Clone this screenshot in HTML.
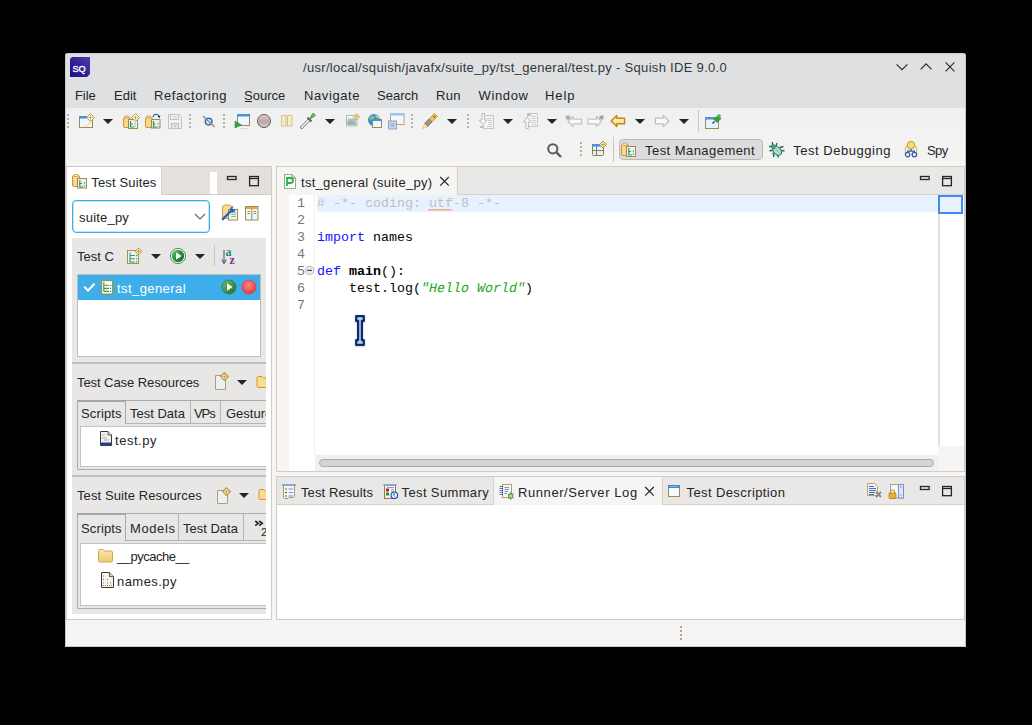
<!DOCTYPE html>
<html><head><meta charset="utf-8">
<style>
html,body{margin:0;padding:0;background:#000;width:1032px;height:725px;overflow:hidden;position:relative}
div,span,svg{position:absolute;box-sizing:border-box}
.t{font-family:"Liberation Sans",sans-serif;font-size:13px;line-height:15px;white-space:pre;color:#232627}
.m{font-family:"Liberation Mono",monospace;font-size:13.33px;line-height:17px;white-space:pre;color:#000}
.dd{width:10px;height:5px}
</style></head><body>
<!-- window -->
<div id="win" style="left:65px;top:53px;width:901px;height:594px;background:#dee0e2;border-radius:3px 3px 0 0"></div>
<!-- toolbar -->
<div style="left:65px;top:108px;width:901px;height:53px;background:linear-gradient(#eff0f1,#f2f2f2 40%,#f3f3f2)"></div>
<!-- main -->
<div style="left:65px;top:161px;width:901px;height:486px;background:#f6f5f4"></div>
<!-- window frame lines -->

<!-- title -->
<div class="t" style="left:303px;top:60px;color:#31363b;letter-spacing:0.31px">/usr/local/squish/javafx/suite_py/tst_general/test.py - Squish IDE 9.0.0</div>

<!-- menu -->
<div class="t" style="left:75px;top:88px;letter-spacing:-0.1px">File</div>
<div class="t" style="left:114px;top:88px">Edit</div>
<div class="t" style="left:154px;top:88px;letter-spacing:0.6px">Refactoring</div>
<div class="t" style="left:244px;top:88px">Source</div>
<div style="left:245px;top:101px;width:7px;height:1px;background:#232627"></div>
<div style="left:189px;top:101px;width:5px;height:1px;background:#232627"></div>
<div class="t" style="left:304px;top:88px;letter-spacing:0.6px">Navigate</div>
<div class="t" style="left:377px;top:88px">Search</div>
<div class="t" style="left:436px;top:88px;letter-spacing:0.34px">Run</div>
<div class="t" style="left:478.5px;top:88px;letter-spacing:0.65px">Window</div>
<div class="t" style="left:545px;top:88px;letter-spacing:0.9px">Help</div>

<!-- toolbar row2 -->
<div style="left:619px;top:139px;width:144px;height:21px;background:#dcdcdc;border:1px solid #b9b9b9;border-radius:4px"></div>
<div class="t" style="left:645px;top:143px;letter-spacing:0.45px">Test Management</div>
<div class="t" style="left:793.3px;top:143px;letter-spacing:0.52px">Test Debugging</div>
<div class="t" style="left:927px;top:143px;letter-spacing:-0.6px">Spy</div>
<div style="left:613px;top:137px;width:1px;height:25px;background:#c8c8c8"></div>
<div style="left:698px;top:110px;width:1px;height:22px;background:#c8c8c8"></div>

<!-- LEFT PANEL -->
<div style="left:66px;top:166px;width:206px;height:454px;background:#fff;border:1px solid #d1cbc6"></div>
<div style="left:161px;top:167px;width:110px;height:28px;background:#e3e0dd;border-bottom:1px solid #d3cdc8;border-left:1px solid #d8d3ce"></div>
<div style="left:67px;top:167px;width:94px;height:28px;background:#fff"></div>
<div style="left:210px;top:172px;width:7px;height:22px;background:#fff"></div>
<div class="t" style="left:91.3px;top:175px;letter-spacing:0.14px">Test Suites</div>
<!-- combo -->
<div style="left:72px;top:200px;width:138px;height:33px;background:#fff;border:1px solid #3daee9;border-radius:4px;box-shadow:inset 0 0 0 1px rgba(61,174,233,.3)"></div>
<div class="t" style="left:79px;top:210px;letter-spacing:0.2px">suite_py</div>

<!-- section 1 -->
<div style="left:72px;top:238px;width:194px;height:124px;background:#e8e7e6"></div>
<div class="t" style="left:77px;top:249px">Test C</div>
<div style="left:214px;top:245px;width:1px;height:21px;background:#c4c4c4"></div>
<div style="left:77px;top:274px;width:184px;height:83px;background:#fff;border:1px solid #bcc0c4"></div>
<div style="left:78px;top:275px;width:182px;height:25px;background:#3daee9"></div>
<div class="t" style="left:117px;top:281px;color:#fff;letter-spacing:0.42px">tst_general</div>
<div style="left:72px;top:362px;width:194px;height:2px;background:#bdbdbd"></div>

<!-- section 2 -->
<div style="left:72px;top:364px;width:194px;height:111px;background:#e8e7e6"></div>
<div class="t" style="left:77px;top:375px;letter-spacing:-0.07px">Test Case Resources</div>
<div style="left:77px;top:400px;width:189px;height:70px;border:1px solid #aaaaaa;border-right:none;border-radius:2px 0 0 2px"></div>
<div style="left:77px;top:400px;width:49px;height:24px;background:#e8e7e6;border-top:2px solid #a6a6a6;border-left:1px solid #aaaaaa;border-right:1px solid #aaaaaa"></div>
<div style="left:126px;top:423px;width:140px;height:1px;background:#b4b4b4"></div>
<div style="left:220px;top:401px;width:1px;height:22px;background:#b4b4b4"></div>
<div style="left:190px;top:401px;width:1px;height:22px;background:#b4b4b4"></div>
<div class="t" style="left:81px;top:406px;letter-spacing:0.13px">Scripts</div>
<div class="t" style="left:130px;top:406px">Test Data</div>
<div class="t" style="left:194px;top:406px;letter-spacing:-1.1px">VPs</div>
<div style="left:72px;top:400px;width:194px;height:30px;overflow:hidden"><div class="t" style="left:154px;top:6px">Gestures</div></div>
<div style="left:80px;top:426px;width:186px;height:41px;background:#fff;border:1px solid #c0c3c6;border-right:none"></div>
<div class="t" style="left:115px;top:433px;letter-spacing:0.53px">test.py</div>
<div style="left:72px;top:475px;width:194px;height:2px;background:#bdbdbd"></div>

<!-- section 3 -->
<div style="left:72px;top:477px;width:194px;height:137px;background:#e8e7e6"></div>
<div class="t" style="left:77px;top:488px;letter-spacing:0.1px">Test Suite Resources</div>
<div style="left:77px;top:513px;width:189px;height:96px;border:1px solid #aaaaaa;border-right:none;border-radius:2px 0 0 2px"></div>
<div style="left:77px;top:513px;width:49px;height:28px;background:#e8e7e6;border-top:2px solid #a6a6a6;border-left:1px solid #aaaaaa;border-right:1px solid #aaaaaa"></div>
<div style="left:126px;top:540px;width:140px;height:1px;background:#b4b4b4"></div>
<div style="left:178px;top:514px;width:1px;height:26px;background:#b4b4b4"></div>
<div style="left:243px;top:514px;width:1px;height:26px;background:#b4b4b4"></div>
<div class="t" style="left:81px;top:521px;letter-spacing:0.13px">Scripts</div>
<div class="t" style="left:130px;top:521px;letter-spacing:0.6px">Models</div>
<div class="t" style="left:183px;top:521px">Test Data</div>
<div style="left:80px;top:543px;width:186px;height:63px;background:#fff;border:1px solid #c0c3c6;border-right:none"></div>
<div class="t" style="left:117px;top:549px;letter-spacing:-0.5px">__pycache__</div>
<div class="t" style="left:117px;top:574px;letter-spacing:0.45px">names.py</div>

<!-- EDITOR PANEL -->
<div style="left:276px;top:166px;width:689px;height:306px;background:#f6f5f4;border:1px solid #d1cbc6"></div>
<div style="left:457px;top:167px;width:507px;height:28px;background:#e9e8e6;border-left:1px solid #d6d0cb;border-bottom:1px solid #d6d0cb"></div>
<div style="left:277px;top:167px;width:180px;height:28px;background:#f6f5f4"></div>
<div class="t" style="left:301px;top:175px;letter-spacing:0.29px">tst_general (suite_py)</div>
<!-- gutter & text -->
<div style="left:289px;top:195px;width:26px;height:276px;background:#fff"></div>
<div style="left:314px;top:195px;width:1px;height:260px;background:#f0f0f0"></div>
<div style="left:315px;top:195px;width:623px;height:260px;background:#fff"></div>
<div style="left:317px;top:195px;width:621px;height:17px;background:#e8f2fe"></div>
<div style="left:938px;top:195px;width:26px;height:251px;background:#fff;border-left:2px solid #e2e2e2"></div>
<div style="left:938px;top:195px;width:25px;height:19px;background:#e8f2fe;border:2px solid #3d8ef0"></div>
<div style="left:315px;top:455px;width:623px;height:16px;background:#eff0f1"></div>
<div style="left:319px;top:459px;width:615px;height:8px;background:#d3d5d7;border:1px solid #a9acaf;border-radius:4px"></div>

<div class="m" style="left:297px;top:195px;color:#787878">1
2
3
4
5
6
7</div>
<div class="m" style="left:317px;top:195px"><span style="position:static;color:#c0c0c0"># -*- coding: utf-8 -*-</span>

<span style="position:static;color:#1414ff">import</span> names

<span style="position:static;color:#1414ff">def</span> <b>main</b>():
    test.log(<span style="position:static;display:inline-block;transform:skewX(-12deg);color:#22a822">"Hello World"</span>)
</div>

<!-- BOTTOM PANEL -->
<div style="left:276px;top:476px;width:689px;height:144px;background:#fff;border:1px solid #d1cbc6"></div>
<div style="left:277px;top:477px;width:687px;height:28px;background:#e9e8e6;border-bottom:1px solid #d6d0cb"></div>
<div style="left:493px;top:477px;width:170px;height:28px;background:#f6f5f4;border-left:1px solid #d6d2ce;border-right:1px solid #d6d2ce"></div>
<div class="t" style="left:301px;top:485px;letter-spacing:0.1px">Test Results</div>
<div class="t" style="left:401.6px;top:485px;letter-spacing:0.36px">Test Summary</div>
<div class="t" style="left:518px;top:485px;letter-spacing:0.58px">Runner/Server Log</div>
<div class="t" style="left:686.5px;top:485px;letter-spacing:0.4px">Test Description</div>


<!-- ===== TITLE ICONS ===== -->
<svg style="left:70px;top:57px" width="20" height="20"><defs><linearGradient id="sqg" x1="0" y1="1" x2="1" y2="0"><stop offset="0" stop-color="#1d0a86"/><stop offset="1" stop-color="#4b3ca6"/></linearGradient></defs>
<path d="M2 0H20V17L17 20H0V2Z" fill="url(#sqg)"/>
<text x="2.6" y="15.2" font-family="Liberation Sans" font-size="9.2" fill="#fff" stroke="#fff" stroke-width=".35" letter-spacing="-.2">SQ</text></svg>
<svg style="left:894px;top:60px" width="64" height="14" fill="none" stroke="#232627" stroke-width="1.1">
<path d="M2.6 4.3L8 9.7L13.4 4.3"/><path d="M26.7 9.3L32.1 3.9L37.5 9.3"/><path d="M51.6 2.4L60.4 11.3M60.4 2.4L51.6 11.3"/></svg>

<!-- ===== TOOLBAR ROW 1 ===== -->
<!-- grips -->
<svg style="left:67px;top:113px" width="3" height="15" fill="#bdb1a2"><rect x="0" y="1" width="2" height="2"/><rect x="0" y="5" width="2" height="2"/><rect x="0" y="9" width="2" height="2"/><rect x="0" y="13" width="2" height="2"/></svg>
<svg style="left:189px;top:113px" width="3" height="15" fill="#bdb1a2"><rect x="0" y="1" width="2" height="2"/><rect x="0" y="5" width="2" height="2"/><rect x="0" y="9" width="2" height="2"/><rect x="0" y="13" width="2" height="2"/></svg>
<svg style="left:223px;top:113px" width="3" height="15" fill="#bdb1a2"><rect x="0" y="1" width="2" height="2"/><rect x="0" y="5" width="2" height="2"/><rect x="0" y="9" width="2" height="2"/><rect x="0" y="13" width="2" height="2"/></svg>
<svg style="left:411px;top:113px" width="3" height="15" fill="#bdb1a2"><rect x="0" y="1" width="2" height="2"/><rect x="0" y="5" width="2" height="2"/><rect x="0" y="9" width="2" height="2"/><rect x="0" y="13" width="2" height="2"/></svg>
<svg style="left:467px;top:113px" width="3" height="15" fill="#bdb1a2"><rect x="0" y="1" width="2" height="2"/><rect x="0" y="5" width="2" height="2"/><rect x="0" y="9" width="2" height="2"/><rect x="0" y="13" width="2" height="2"/></svg>
<!-- dropdown arrows -->
<svg style="left:103px;top:119px" class="dd"><path d="M0 0H10L5 5Z" fill="#232627"/></svg>
<svg style="left:325px;top:119px" class="dd"><path d="M0 0H10L5 5Z" fill="#232627"/></svg>
<svg style="left:447px;top:119px" class="dd"><path d="M0 0H10L5 5Z" fill="#232627"/></svg>
<svg style="left:503px;top:119px" class="dd"><path d="M0 0H10L5 5Z" fill="#232627"/></svg>
<svg style="left:547px;top:119px" class="dd"><path d="M0 0H10L5 5Z" fill="#232627"/></svg>
<svg style="left:635px;top:119px" class="dd"><path d="M0 0H10L5 5Z" fill="#232627"/></svg>
<svg style="left:679px;top:119px" class="dd"><path d="M0 0H10L5 5Z" fill="#232627"/></svg>
<!-- new window + star -->
<svg style="left:78px;top:112px" width="18" height="18">
<rect x="1.5" y="4.5" width="13" height="11" fill="#eef6fd" stroke="#9c8a5a"/><rect x="1" y="4" width="11" height="2.5" fill="#4a90d9"/>
<path d="M5 15C10 14 12 11 13 8" stroke="#f3dc94" stroke-width="1.2" fill="none"/>
<path d="M12.5 1.6L16.4 5.5L12.5 9.4L8.6 5.5Z" fill="#fff" stroke="#b48a28" stroke-width=".9" stroke-linejoin="round"/><path d="M12.5 3.4V7.6M10.4 5.5H14.6" stroke="#c8a040" stroke-width=".9"/></svg>
<!-- new suite -->
<svg style="left:122px;top:112px" width="18" height="18">
<rect x="1.5" y="5.5" width="7" height="10" rx="1.5" fill="#f7d98b" stroke="#d0913a"/><rect x="2.5" y="4" width="4" height="2" rx="1" fill="#f3e0a6" stroke="#d0913a" stroke-width=".8"/>
<rect x="6.5" y="7.5" width="9" height="9" fill="#eef3f6" stroke="#a08a50"/><path d="M8.5 9V15H12M8.5 12H11" stroke="#2e9a4a" stroke-width="1.2" fill="none"/><rect x="12.5" y="11" width="1" height="1" fill="#2e9a4a"/><rect x="12.5" y="13.5" width="1" height="1" fill="#2e9a4a"/>
<path d="M13.5 1.6L17.4 5.5L13.5 9.4L9.6 5.5Z" fill="#fff" stroke="#b48a28" stroke-width=".9" stroke-linejoin="round"/><path d="M13.5 3.4V7.6M11.4 5.5H15.6" stroke="#c8a040" stroke-width=".9"/></svg>
<!-- open suite -->
<svg style="left:144px;top:112px" width="18" height="18">
<rect x="1.5" y="5.5" width="7" height="10" rx="1.5" fill="#f7d98b" stroke="#d0913a"/><rect x="2.5" y="4" width="4" height="2" rx="1" fill="#f3e0a6" stroke="#d0913a" stroke-width=".8"/>
<rect x="7.5" y="7.5" width="8.5" height="8.5" fill="#eef3f6" stroke="#a08a50"/><path d="M9.5 9V15H12.5M9.5 12H11.5" stroke="#2e9a4a" stroke-width="1.2" fill="none"/><rect x="13.5" y="11" width="1" height="1" fill="#2e9a4a"/><rect x="13.5" y="13.5" width="1" height="1" fill="#2e9a4a"/>
<path d="M9 5C10 1.5 14 1.5 15 4.5" stroke="#2b4d7a" stroke-width="1.1" fill="none"/><path d="M13.5 4.2L16.3 3.6L15.7 6.3Z" fill="#1e3a66"/></svg>
<!-- save disabled -->
<svg style="left:166px;top:113px" width="17" height="17" fill="none" stroke="#c2c2c2">
<path d="M2.5 1.5H13.5L15.5 3.5V15.5H2.5Z" fill="#f0f0f0"/><rect x="4.5" y="1.5" width="8" height="5" fill="#f7f7f7"/><path d="M6 3.5H11M6 5H11" stroke="#d4d4d4"/><rect x="5.5" y="10.5" width="7" height="5" fill="#e6e6e6"/><path d="M9 12V14" stroke="#aaa"/></svg>
<!-- object map -->
<svg style="left:202px;top:114px" width="14" height="14">
<circle cx="6.6" cy="7.6" r="3.3" fill="#dde9f3" stroke="#2b6fb1" stroke-width="1.5"/><path d="M1 2L12.5 13" stroke="#8a8a8a" stroke-width="1.3"/></svg>
<!-- launch app -->
<svg style="left:234px;top:113px" width="17" height="17">
<rect x="3.5" y="1.5" width="12" height="11" fill="#eef6fd" stroke="#9c8a5a"/><rect x="3" y="1" width="13" height="2.5" fill="#4a90d9"/>
<path d="M1 8V15L7.5 12Z" fill="#3aa04a" stroke="#2a8a3a" stroke-width=".6"/><path d="M6 15.5H14" stroke="#d8d8d8"/></svg>
<!-- record -->
<svg style="left:256px;top:113px" width="16" height="16"><defs><linearGradient id="rg" x1="0" y1="0" x2="0" y2="1"><stop offset="0" stop-color="#d9cccc"/><stop offset=".55" stop-color="#b9a8a8"/><stop offset="1" stop-color="#d6caca"/></linearGradient></defs>
<circle cx="8" cy="8" r="6.6" fill="url(#rg)" stroke="#6e6868" stroke-width="1"/></svg>
<!-- pause -->
<svg style="left:280px;top:114px" width="14" height="13">
<rect x="1.5" y="1.5" width="4.5" height="10.5" fill="#f6ecc6" stroke="#d9c28a"/><rect x="7.5" y="1.5" width="4.5" height="10.5" fill="#f6ecc6" stroke="#d9c28a"/></svg>
<!-- eyedropper -->
<svg style="left:299px;top:112px" width="18" height="18">
<path d="M2 16.5L1.6 14.8L9.5 6.8L11.2 8.5L3.2 16.4Z" fill="#fafafa" stroke="#6d6d6d" stroke-width="1"/>
<path d="M8.5 5.5L12.5 9.5" stroke="#5a5a5a" stroke-width="1.8"/>
<path d="M10.5 7.5L13.5 1.8C14.5 .9 16.6 2.6 16 3.8L10.5 7.5Z" fill="#5cc65c" stroke="#3a8a3a" stroke-width=".8"/></svg>
<!-- image new -->
<svg style="left:345px;top:113px" width="16" height="15">
<rect x="1.5" y="2.5" width="10.5" height="10.5" fill="#f3f6f8" stroke="#b7b7b7"/><path d="M2.5 5.5H11V12H2.5Z" fill="#a4c2d9"/><path d="M2.5 9L6 7.5L11 10V12H2.5Z" fill="#9cb89a"/>
<path d="M11.5 0.8L14.6 3.9L11.5 7L8.4 3.9Z" fill="#fff6d8" stroke="#c9a448"/><path d="M11.5 2.2V5.6M9.8 3.9H13.2" stroke="#d4ae58"/></svg>
<!-- globe window -->
<svg style="left:367px;top:113px" width="16" height="16">
<circle cx="7" cy="7" r="6" fill="#3b8fd2"/><path d="M3 3.5C5 2 7 3 8 4.5C7 6 5 6 4 8C3 7 2.5 5 3 3.5Z" fill="#8cc26a"/><path d="M8 2C10 2 12 3.5 12.5 5.5L10 5C9 4 8.5 3 8 2Z" fill="#c9d86a"/>
<rect x="5.5" y="6.5" width="9" height="8" fill="#eef6fd" stroke="#9c8a5a"/><rect x="5" y="6" width="10" height="2" fill="#4a90d9"/></svg>
<!-- two windows -->
<svg style="left:387px;top:112px" width="18" height="18">
<rect x="3.5" y="1.5" width="13.5" height="11" fill="#f4f8fb" stroke="#b8a67a"/><rect x="3" y="1" width="14.5" height="2.5" fill="#9dc3e6"/>
<rect x="1.5" y="9" width="8" height="8" fill="#c9d5e8" stroke="#8ca2c8"/><rect x="3.5" y="11" width="4" height="4" fill="#a8b8d8"/></svg>
<!-- pen -->
<svg style="left:421px;top:112px" width="18" height="18">
<path d="M1.5 16.5L4 11.5L7 14.5Z" fill="#fff2b8" stroke="#e8b84a" stroke-width=".8"/>
<path d="M3.8 11.2L8.2 6.8L11.2 9.8L6.8 14.2Z" fill="#9d9590" stroke="#6e6660" stroke-width=".8"/>
<path d="M8.2 6.8L13.5 1.5L16.5 4.5L11.2 9.8Z" fill="#f6c25a" stroke="#c88a2a" stroke-width=".8"/><circle cx="13.3" cy="4.7" r=".9" fill="#2a5a9a"/></svg>
<!-- import disabled -->
<svg style="left:478px;top:112px" width="17" height="18">
<rect x="5.5" y="3.5" width="10" height="13" fill="#f4f4f4" stroke="#c6c6c6"/><path d="M8.5 6.5H14M10 8.5H14M10 10.5H14M10 12.5H14M9 14.5H14" stroke="#cfcfcf"/><rect x="2" y="14" width="4" height="2" fill="#bdbdbd"/>
<path d="M4 1.5H6.5V8H9L5.2 13L1.2 8H4Z" fill="#f7f7f7" stroke="#bdbdbd"/></svg>
<!-- export disabled -->
<svg style="left:522px;top:112px" width="17" height="18">
<rect x="5.5" y="1.5" width="10" height="13" fill="#f4f4f4" stroke="#c6c6c6"/><path d="M9 4.5H14M10 6.5H14M10 8.5H14M10 10.5H14M10 12.5H14" stroke="#cfcfcf"/><rect x="6" y="2" width="3" height="2" fill="#bdbdbd"/>
<path d="M4 16.5H6.5V10H9L5.2 5L1.2 10H4Z" fill="#f7f7f7" stroke="#bdbdbd"/></svg>
<!-- back star / fwd star / back / fwd -->
<svg style="left:565px;top:114px" width="18" height="14" fill="none" stroke="#c4c4c4">
<path d="M3 7.5L8 2.5V5.2H16.5V9.8H8V12.5Z" fill="#f9f9f9" stroke-width="1.3" stroke-linejoin="round"/><path d="M1 1.5L5 5.5M5 1.5L1 5.5M3 1V6M.5 3.5H5.5" stroke="#9a9a9a" stroke-width=".9"/></svg>
<svg style="left:587px;top:114px" width="18" height="14" fill="none" stroke="#c4c4c4">
<path d="M14.5 7.5L9.5 2.5V5.2H1V9.8H9.5V12.5Z" fill="#f9f9f9" stroke-width="1.3" stroke-linejoin="round"/><path d="M12.5 1.5L16.5 5.5M16.5 1.5L12.5 5.5M14.5 1V6M12 3.5H17" stroke="#9a9a9a" stroke-width=".9"/></svg>
<svg style="left:610px;top:114px" width="16" height="14"><defs><linearGradient id="yg" x1="0" y1="0" x2="0" y2="1"><stop offset="0" stop-color="#fff7d0"/><stop offset="1" stop-color="#f8d878"/></linearGradient></defs>
<path d="M1.2 7L6.8 1.4V4.2H14.6V9.8H6.8V12.6Z" fill="url(#yg)" stroke="#c8860a" stroke-width="1.4" stroke-linejoin="round"/></svg>
<svg style="left:654px;top:114px" width="16" height="14">
<path d="M14.8 7L9.2 1.4V4.2H1.4V9.8H9.2V12.6Z" fill="#f9f9f9" stroke="#c0c0c0" stroke-width="1.3" stroke-linejoin="round"/></svg>
<!-- edit pin -->
<svg style="left:704px;top:113px" width="18" height="17">
<rect x="1.5" y="4.5" width="13" height="11" fill="#e6f5fc" stroke="#9c8a5a"/><rect x="1" y="4" width="11" height="2.5" fill="#4a90d9"/>
<path d="M8.5 10.5L10.5 8.5" stroke="#333" stroke-width="1.2"/><path d="M10 6.5L14 2.5L17 5.5L13 9.5Z" fill="#3aa03a" stroke="#2a7a2a" stroke-width=".7"/><circle cx="15" cy="3" r="1.8" fill="#4ab84a"/></svg>

<!-- ===== TOOLBAR ROW 2 ===== -->
<svg style="left:546px;top:142px" width="17" height="17" fill="none" stroke="#5b5b5b" stroke-width="2"><circle cx="6.8" cy="6.8" r="4.6"/><path d="M10.2 10.2L15 15" stroke-width="2.4"/></svg>
<svg style="left:580px;top:141px" width="3" height="15" fill="#b9ad9f"><rect x="0" y="1" width="2" height="2"/><rect x="0" y="5" width="2" height="2"/><rect x="0" y="9" width="2" height="2"/><rect x="0" y="13" width="2" height="2"/></svg>
<svg style="left:591px;top:140px" width="17" height="17">
<rect x="1.5" y="4.5" width="11" height="11" rx="1" fill="#e4f1fb" stroke="#8c7a50"/><rect x="1" y="4" width="9" height="2.5" fill="#4a90d9"/><path d="M5.5 6V15.5M1.5 10.5H12.5" stroke="#8c7a50"/>
<path d="M12 1L15.5 4.5L12 8L8.5 4.5Z" fill="#fff6d8" stroke="#b98f2c"/><path d="M12 2.6V6.4M10.1 4.5H13.9" stroke="#c39a34"/></svg>
<svg style="left:620px;top:141px" width="17" height="17">
<rect x="1.5" y="3.5" width="7" height="11" rx="1.5" fill="#f7d98b" stroke="#d0913a"/><rect x="2.5" y="2" width="4.5" height="2.5" rx="1" fill="#f8ecc0" stroke="#d0913a" stroke-width=".8"/>
<rect x="6.5" y="5.5" width="9" height="10" fill="#eef3f6" stroke="#a08a50"/><path d="M8.8 7V14H12M8.8 10.5H11" stroke="#2e9a4a" stroke-width="1.2" fill="none"/><rect x="12.8" y="9.5" width="1.2" height="1.2" fill="#2e9a4a"/><rect x="12.8" y="12.3" width="1.2" height="1.2" fill="#2e9a4a"/></svg>
<svg style="left:768px;top:141px" width="18" height="18">
<path d="M4.5 1V5M9 2L8 5M1 5.5H4.5M15.5 5.5L12 6.5M1.5 10L5 9M16.5 9.5L13 10M5 12L6 16M9 13L10.5 16.5" stroke="#2a6a50" stroke-width="1.4"/>
<ellipse cx="9.2" cy="9.8" rx="3.6" ry="5" transform="rotate(-45 9.2 9.8)" fill="#bfe3a8" stroke="#1a7aa8" stroke-width="1.2"/><path d="M7.5 8L11 11.5" stroke="#6aa85a" stroke-width=".8"/><circle cx="5.4" cy="5.8" r="2" fill="#5aa870" stroke="#1a7aa8" stroke-width=".9"/></svg>
<svg style="left:903px;top:140px" width="16" height="18">
<path d="M4.2 5.5C2 7 1.6 10.5 3 13M11.8 5.5C14 7 14.4 10.5 13 13" stroke="#d2b25a" stroke-width="1" fill="none"/>
<circle cx="8" cy="5.2" r="3.8" fill="#f8da7a" stroke="#c89a2a" stroke-width="1"/><path d="M8 9V11M4.6 13.5V11.2H11.4V13.5" stroke="#3a5aa0" stroke-width="1.2" fill="none"/>
<circle cx="4.6" cy="14.6" r="2.2" fill="#fff" stroke="#3a5aa0" stroke-width="1.3"/><circle cx="11.4" cy="14.6" r="2.2" fill="#fff" stroke="#3a5aa0" stroke-width="1.3"/></svg>


<!-- ===== LEFT PANEL ICONS ===== -->
<svg style="left:71px;top:174px" width="17" height="15">
<rect x="1.5" y="1.5" width="7" height="11" rx="1.5" fill="#f7d98b" stroke="#d0913a"/><rect x="2.5" y="0.5" width="4.5" height="2" rx="1" fill="#f8ecc0" stroke="#d0913a" stroke-width=".8"/>
<rect x="6.5" y="4.5" width="9" height="9.5" fill="#eef3f6" stroke="#a08a50"/><path d="M8.8 6V13H12M8.8 9.5H11" stroke="#2e9a4a" stroke-width="1.2" fill="none"/><rect x="12.8" y="8.5" width="1.2" height="1.2" fill="#2e9a4a"/><rect x="12.8" y="11.3" width="1.2" height="1.2" fill="#2e9a4a"/></svg>
<!-- min / max -->
<svg style="left:226px;top:175px" width="36" height="12" fill="none" stroke="#232627" stroke-width="1.3"><rect x="1.5" y="1.5" width="8.6" height="3"/><rect x="23.6" y="1.5" width="8.8" height="9.2"/><path d="M23.6 3.5H32.4"/></svg>
<svg style="left:919px;top:175px" width="36" height="12" fill="none" stroke="#232627" stroke-width="1.3"><rect x="1.5" y="1.5" width="8.6" height="3"/><rect x="23.6" y="1.5" width="8.8" height="9.2"/><path d="M23.6 3.5H32.4"/></svg>
<svg style="left:919px;top:485px" width="36" height="12" fill="none" stroke="#232627" stroke-width="1.3"><rect x="1.5" y="1.5" width="8.6" height="3"/><rect x="23.6" y="1.5" width="8.8" height="9.2"/><path d="M23.6 3.5H32.4"/></svg>
<!-- combo chevron -->
<svg style="left:194px;top:212px" width="12" height="9" fill="none" stroke="#6b6b6b" stroke-width="1.2"><path d="M1 2L6 7L11 2"/></svg>
<!-- wrench folder -->
<svg style="left:221px;top:204px" width="18" height="17">
<path d="M1.5 4C1.5 2 2.5 1 4.5 1H8C9.5 1 10.5 2 10.5 3.5V14.5H1.5Z" fill="#f8dc94" stroke="#d0913a" stroke-width=".9"/>
<rect x="7.5" y="5.5" width="9" height="10.5" fill="#eef3f6" stroke="#a08a50"/><path d="M10.5 8.5H15M10.5 10.5H15M10.5 12.5H15" stroke="#3a9a5a" stroke-dasharray="1.2 .8"/>
<path d="M1.8 15.2L11 6" stroke="#2a64b8" stroke-width="2.4" stroke-linecap="round"/><path d="M9.2 6.8C8.6 4.6 10 2.2 12.6 2.2L11.4 4.2L12.6 5.8L14.6 4.8C14.8 7.2 12.6 8.8 10.4 8" fill="#2a64b8"/></svg>
<!-- table icon -->
<svg style="left:244px;top:205px" width="16" height="16">
<rect x="1.5" y="1.5" width="12.5" height="13.5" fill="#eef6fb" stroke="#9c8a5a"/><rect x="2" y="2" width="11.5" height="2" fill="#f0a040"/><path d="M7.75 4V15" stroke="#9c8a5a"/><path d="M3.5 6.5H6M3.5 8.5H6M9.5 6.5H12M9.5 8.5H12" stroke="#9c8a5a"/></svg>

<!-- section 1 toolbar -->
<svg style="left:126px;top:247px" width="17" height="18">
<rect x="1.5" y="3.5" width="11" height="13" fill="#eef3f6" stroke="#a89050"/><path d="M4 5.5V15H9M4 8.5H9M4 11.8H9" stroke="#2e9a4a" stroke-width="1.1" fill="none"/><rect x="10" y="8" width="1.2" height="1.2" fill="#2e9a4a"/><rect x="10" y="11.3" width="1.2" height="1.2" fill="#2e9a4a"/><rect x="10" y="14.3" width="1.2" height="1.2" fill="#2e9a4a"/>
<path d="M12.5 1L16 4.5L12.5 8L9 4.5Z" fill="#fff6d8" stroke="#b98f2c"/><path d="M12.5 2.6V6.4M10.6 4.5H14.4" stroke="#c39a34"/></svg>
<svg style="left:151px;top:254px" class="dd"><path d="M0 0H10L5 5Z" fill="#232627"/></svg>
<svg style="left:169px;top:247px" width="18" height="18"><defs><linearGradient id="pg" x1="0" y1="0" x2="1" y2="1"><stop offset="0" stop-color="#7ac07a"/><stop offset=".5" stop-color="#2e8a3a"/><stop offset="1" stop-color="#1e6a2a"/></linearGradient></defs>
<circle cx="9" cy="9" r="7.6" fill="#fff" stroke="#3a9a4a" stroke-width="1"/><circle cx="9" cy="9" r="6.2" fill="url(#pg)"/><path d="M7 5.2V12.8L12.6 9Z" fill="#fff"/></svg>
<svg style="left:195px;top:254px" class="dd"><path d="M0 0H10L5 5Z" fill="#232627"/></svg>
<svg style="left:220px;top:248px" width="18" height="17">
<path d="M4 2V13.5" stroke="#34608a" stroke-width="1.1"/><path d="M1.8 11.5L4 15.5L6.2 11.5" fill="none" stroke="#34608a" stroke-width="1.1"/>
<text x="5.6" y="8.2" font-family="Liberation Serif" font-weight="bold" font-size="12" fill="#1a8a7a">a</text><text x="9.4" y="16.3" font-family="Liberation Serif" font-weight="bold" font-size="12" fill="#8a2aa0">z</text></svg>
<!-- row icons -->
<svg style="left:83px;top:282px" width="13" height="10" fill="none" stroke="#fff" stroke-width="2"><path d="M1.2 4.8L5 8.5L11.5 1.8"/></svg>
<svg style="left:100px;top:279px" width="14" height="16">
<rect x="1.6" y="1.6" width="11" height="13.4" fill="#fafcfc" stroke="#b08a30" stroke-width="1.1"/><path d="M3.8 3V12.4M3.8 6.3H9M3.8 9.4H9M3.8 12.4H9" stroke="#2e9a4a" stroke-width="1.1"/><rect x="10" y="5.8" width="1.2" height="1.2" fill="#2e9a4a"/><rect x="10" y="8.8" width="1.2" height="1.2" fill="#2e9a4a"/><rect x="10" y="11.8" width="1.2" height="1.2" fill="#2e9a4a"/></svg>
<svg style="left:221px;top:279px" width="16" height="16"><defs><linearGradient id="pg2" x1="0" y1="0" x2="1" y2="1"><stop offset="0" stop-color="#6cc06c"/><stop offset="1" stop-color="#1e6e2a"/></linearGradient></defs>
<circle cx="8" cy="8" r="7" fill="url(#pg2)" stroke="#1e6a2a" stroke-width=".6"/><path d="M6 4.3V11.7L11.5 8Z" fill="#fff"/></svg>
<svg style="left:241px;top:279px" width="16" height="16"><defs><radialGradient id="rdg" cx=".45" cy=".35" r=".7"><stop offset="0" stop-color="#ff8a8a"/><stop offset="1" stop-color="#e0303a"/></radialGradient></defs>
<circle cx="8" cy="8" r="7" fill="url(#rdg)" stroke="#d03a44" stroke-width=".6"/></svg>

<!-- section 2 toolbar -->
<svg style="left:214px;top:372px" width="16" height="19">
<path d="M1.5 3.5H8.5L11.5 6.5V17.5H1.5Z" fill="#eaf0f8" stroke="#b0a070"/>
<path d="M10.5 .8L14.3 4.6L10.5 8.4L6.7 4.6Z" fill="#fffbe8" stroke="#b98f2c" stroke-width="1.1"/><path d="M10.5 2.5V6.7M8.4 4.6H12.6" stroke="#d0a848" stroke-width="1.1"/></svg>
<svg style="left:237px;top:380px" class="dd"><path d="M0 0H10L5 5Z" fill="#232627"/></svg>
<svg style="left:256px;top:375px" width="10" height="14"><path d="M1 3C1 2 1.5 1.5 2.5 1.5H6L7.5 3H14V12.5H2.5C1.5 12.5 1 12 1 11Z" fill="#f8dc90" stroke="#d0913a"/></svg>
<svg style="left:99px;top:430px" width="14" height="17">
<path d="M1.5 1.5H9L12.5 5V15.5H1.5Z" fill="#f2f2f2" stroke="#3a3a3a"/><path d="M9 1.5V5H12.5" fill="#ddd" stroke="#3a3a3a" stroke-width=".8"/><path d="M3 5H6M3 8H8M5 10H10" stroke="#b0b0b0"/><rect x="2" y="12.5" width="10" height="2.5" fill="#2a3a8a"/></svg>

<!-- section 3 toolbar -->
<svg style="left:216px;top:487px" width="16" height="18">
<path d="M1.5 3.5H8.5L11.5 6.5V16.5H1.5Z" fill="#eaf0f8" stroke="#b0a070"/>
<path d="M10.5 .8L14.3 4.6L10.5 8.4L6.7 4.6Z" fill="#fffbe8" stroke="#b98f2c" stroke-width="1.1"/><path d="M10.5 2.5V6.7M8.4 4.6H12.6" stroke="#d0a848" stroke-width="1.1"/></svg>
<svg style="left:239px;top:493px" class="dd"><path d="M0 0H10L5 5Z" fill="#232627"/></svg>
<svg style="left:258px;top:488px" width="8" height="13"><path d="M1 3C1 2 1.5 1.5 2.5 1.5H6L7.5 3H14V11.5H2.5C1.5 11.5 1 11 1 10Z" fill="#f8dc90" stroke="#d0913a"/></svg>
<svg style="left:254px;top:519px" width="12" height="18"><path d="M1.2 2L4.3 4.3L1.2 6.6M5.2 2L8.3 4.3L5.2 6.6" fill="none" stroke="#232627" stroke-width="1.6"/><text x="7" y="16.5" font-family="Liberation Sans" font-size="11.5" fill="#232627">2</text></svg>
<svg style="left:97px;top:548px" width="17" height="15"><defs><linearGradient id="fg" x1="0" y1="0" x2="0" y2="1"><stop offset="0" stop-color="#fbe8b0"/><stop offset="1" stop-color="#f0c870"/></linearGradient></defs>
<path d="M1.5 3C1.5 2 2 1.5 3 1.5H6L7.5 3H14C15 3 15.5 3.5 15.5 4.5V12.5C15.5 13.5 15 14 14 14H3C2 14 1.5 13.5 1.5 12.5Z" fill="url(#fg)" stroke="#d8a050"/></svg>
<svg style="left:100px;top:571px" width="15" height="18">
<path d="M1.5 1.5H9.5L13.5 5.5V16.5H1.5Z" fill="#f6f2ea" stroke="#3a3a3a"/><path d="M9.5 1.5V5.5H13.5" fill="#e0d8c8" stroke="#3a3a3a" stroke-width=".8"/><path d="M3 5H5M3 8.5H5M7 8.5H9M3 12H5M7 12H9M10 12H12M3 14.5H12" stroke="#8a8070" stroke-dasharray="1 1"/></svg>


<!-- ===== EDITOR ICONS ===== -->
<svg style="left:283px;top:173px" width="14" height="17">
<path d="M1.5 1.5H9L12.5 5V15.5H1.5Z" fill="#fcfcfc" stroke="#5a7a3a" stroke-dasharray="1.2 .8"/><path d="M9 1.5V5H12.5" fill="none" stroke="#5a7a3a" stroke-width=".8"/>
<path d="M4 13V5H7.3C9 5 10 6 10 7.5S9 10 7.3 10H4" fill="none" stroke="#1fb84a" stroke-width="1.8"/></svg>
<svg style="left:439px;top:176px" width="12" height="11" fill="none" stroke="#232627" stroke-width="1.2"><path d="M1.2 1L9.8 9.6M9.8 1L1.2 9.6"/></svg>
<svg style="left:304px;top:265px" width="11" height="11"><circle cx="5.6" cy="5.4" r="4.1" fill="#e8ecf0" stroke="#b0b8c0" stroke-width="1"/><path d="M3.2 5.4H8" stroke="#46505a" stroke-width="1.3"/></svg>
<svg style="left:428px;top:208px" width="28" height="4"><path d="M0 2.5L1.5 1L3 2.5L4.5 1L6 2.5L7.5 1L9 2.5L10.5 1L12 2.5L13.5 1L15 2.5L16.5 1L18 2.5L19.5 1L21 2.5L22.5 1L24 2.5" fill="none" stroke="#f07a3a" stroke-width="1"/></svg>
<svg style="left:352px;top:312px" width="16" height="36"><defs><filter id="sh" x="-50%" y="-20%" width="200%" height="140%"><feGaussianBlur stdDeviation="1.2"/></filter></defs>
<path d="M3 3H13V10H11V27H13V34H3V27H5V10H3Z" fill="#000" opacity=".22" filter="url(#sh)" transform="translate(0 .8)"/>
<path d="M4.2 4.1H11.8V8.9H9.9V28.1H11.8V32.9H4.2V28.1H6.1V8.9H4.2Z" fill="#b8d0f0" stroke="#0a2a6a" stroke-width="2.2" stroke-linejoin="round"/></svg>

<!-- ===== BOTTOM PANEL ICONS ===== -->
<svg style="left:281px;top:482px" width="16" height="18">
<path d="M2.5 3.5V15.5L4 16.5H7L8 15.5H12.5L13.5 14.5V3.5" fill="#eef4fc" stroke="#b09a60"/><rect x="1" y="2" width="14" height="2" fill="#8aa6d0"/>
<path d="M4 7H6M4 10.5H6M4 14H6" stroke="#10a020" stroke-width="1.2"/><path d="M4 10.5H6" stroke="#f01010" stroke-width="1.2"/><path d="M7.5 7H12M8 10.5H12M7.5 14H12" stroke="#7a96c4" stroke-width="1.1"/></svg>
<svg style="left:382px;top:482px" width="17" height="18">
<rect x="2.5" y="3.5" width="11" height="13" fill="#eef4fc" stroke="#9c7a40"/><rect x="1.5" y="2" width="13" height="2" fill="#8aa6d0"/>
<rect x="4" y="6.5" width="3" height="3" fill="#f01010"/><rect x="4" y="10.5" width="3" height="3" fill="#10a020"/><path d="M5 5.5H12M9 7.5H12M9 9.5H12" stroke="#7a96c4" stroke-width=".9"/>
<circle cx="12.3" cy="13.3" r="3.3" fill="#e8f4fc" stroke="#1e4e9a" stroke-width="1.1"/><path d="M12 11V13.5L13 14.5" stroke="#1e4e9a" stroke-width=".9" fill="none"/></svg>
<svg style="left:497px;top:482px" width="18" height="18">
<rect x="5.5" y="2.5" width="9" height="13" fill="#eef6fc" stroke="#c0a060"/><path d="M2.5 4.5H4M2.5 6.5H4M2.5 8.5H4M2.5 10.5H4M2.5 12.5H4" stroke="#3a7ac0" stroke-width="1.2"/><path d="M4.5 4.5H6M4.5 6.5H6M4.5 8.5H6M4.5 10.5H6M4.5 12.5H6" stroke="#1a2a5a" stroke-width="1.2"/><path d="M7.5 5.5H12M7.5 7.5H12M7.5 9.5H11M7.5 11.5H10" stroke="#7a96c4"/>
<path d="M11 12L16.5 16M16.5 11.5L11 16.5M13.8 10.5V17.5" stroke="#1a5a3a" stroke-width="1"/><circle cx="13.8" cy="14" r="2.2" fill="#c8e83a" stroke="#1a7a9a" stroke-width=".8"/></svg>
<svg style="left:644px;top:486px" width="12" height="11" fill="none" stroke="#232627" stroke-width="1.2"><path d="M1.2 1L9.8 9.6M9.8 1L1.2 9.6"/></svg>
<svg style="left:667px;top:484px" width="14" height="14">
<rect x="1.5" y="1.5" width="11" height="11" fill="#f4faff" stroke="#a88a40"/><rect x="1" y="1" width="12" height="3" fill="#3a84c8"/><path d="M2.5 2.5H11.5" stroke="#7ac0e8"/></svg>
<svg style="left:866px;top:482px" width="17" height="17">
<path d="M1.5 1.5H8.5L11.5 4.5V13.5H1.5Z" fill="#eef4fc" stroke="#c0a060"/><path d="M3 4.5H8M3 6.5H10M3 8.5H10M3 10.5H9M3 12.5H8" stroke="#4a6ab0" stroke-width="1"/>
<path d="M10 10L15 15M15 10L10 15" stroke="#888" stroke-width="1.8"/></svg>
<svg style="left:888px;top:483px" width="17" height="17">
<rect x="2.5" y="1.5" width="13" height="13.5" fill="#eef8fd" stroke="#9aa8c8"/><path d="M2.5 1.5H15.5" stroke="#b8a060"/><rect x="10.5" y="1.5" width="5" height="13.5" fill="#dde8f4" stroke="#7a90c0"/><rect x="12.5" y="3.5" width="1" height="1" fill="#2a4a9a"/><rect x="12.5" y="11.5" width="1" height="1" fill="#2a4a9a"/>
<path d="M2.5 10V8.5C2.5 6.5 6.5 6.5 6.5 8.5V10" fill="none" stroke="#c89020" stroke-width="1.2"/><rect x="1" y="10" width="7" height="5.5" rx=".8" fill="#e8b030" stroke="#b07810" stroke-width=".8"/></svg>
<!-- status grip -->
<svg style="left:680px;top:625px" width="3" height="16" fill="#b0a698"><rect x="0" y="1" width="2" height="2"/><rect x="0" y="5" width="2" height="2"/><rect x="0" y="9" width="2" height="2"/><rect x="0" y="13" width="2" height="2"/></svg>

<div style="left:65px;top:53px;width:901px;height:594px;border:1px solid #c6c8ca;border-radius:3px 3px 0 0"></div>
</body></html>
